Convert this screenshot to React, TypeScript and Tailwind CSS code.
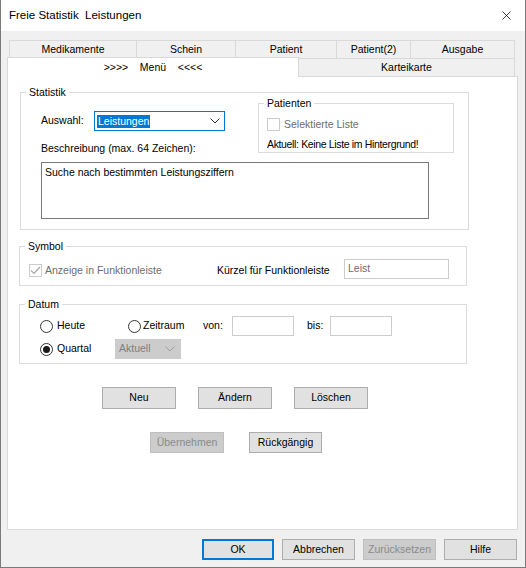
import { X } from 'lucide-react';

const font = { fontFamily: '"Liberation Sans", Arial, sans-serif' };

function Radio({ checked }: { checked?: boolean }) {
  return (
    <span className="w-[13px] h-[13px] rounded-full border border-[#333] bg-white flex items-center justify-center shrink-0">
      {checked && <span className="w-[7px] h-[7px] rounded-full bg-[#1a1a1a]" />}
    </span>
  );
}

function Chevron({ color = '#333' }: { color?: string }) {
  return (
    <svg width="10" height="6" viewBox="0 0 10 6" className="shrink-0">
      <polyline points="0.5,0.5 5,5 9.5,0.5" fill="none" stroke={color} strokeWidth="1" />
    </svg>
  );
}

function Group({ label, className, children }: { label: string; className: string; children?: React.ReactNode }) {
  return (
    <div className={`relative border border-[#dcdcdc] ${className}`}>
      <span className="absolute -top-[8px] left-[5px] bg-white px-[3px] leading-[14px]">{label}</span>
      {children}
    </div>
  );
}

function Btn({ label, w = 'w-[74px]', h = 'h-[22px]', disabled, primary }: { label: string; w?: string; h?: string; disabled?: boolean; primary?: boolean }) {
  const cls = disabled
    ? 'bg-[#cccccc] border border-[#bfbfbf] text-[#8a8a8a]'
    : primary
      ? 'bg-[#e1e1e1] border-2 border-[#0078d7] text-black'
      : 'bg-[#e1e1e1] border border-[#adadad] text-black';
  return <div className={`${w} ${h} ${cls} flex items-center justify-center shrink-0`}>{label}</div>;
}

export default function App() {
  return (
    <div className="w-[526px] h-[568px] bg-[#f0f0f0] border-l border-r border-b border-[#7a7a7a] text-[10.5px] text-black overflow-hidden flex flex-col" style={font}>
      {/* Title bar */}
      <div className="h-[31px] bg-white flex items-center justify-between pl-[8px] pr-[11px] shrink-0">
        <span className="text-[11.5px] whitespace-pre">Freie Statistik  Leistungen</span>
        <X size={15} strokeWidth={1.2} className="text-black" />
      </div>

      {/* Tabs */}
      <div className="mt-[9px] flex ml-[8px] h-[18px]">
        {[
          ['Medikamente', 'w-[128px]'],
          ['Schein', 'w-[99px]'],
          ['Patient', 'w-[101px]'],
          ['Patient(2)', 'w-[74px]'],
          ['Ausgabe', 'w-[104px]'],
        ].map(([t, w], i) => (
          <div key={t} className={`${w} border-t border-r border-[#d9d9d9] ${i === 0 ? 'border-l' : ''} flex items-center justify-center`}>
            {t}
          </div>
        ))}
      </div>
      <div className="flex ml-[6px] h-[19px]">
        <div className="relative z-10 w-[292px] h-[20px] -mt-[1px] bg-white border-t border-l border-r border-[#d9d9d9] flex items-center justify-center whitespace-pre">
          {'>>>>    Menü    <<<<'}
        </div>
        <div className="w-[216px] h-[19px] border-t border-r border-[#d9d9d9] flex items-center justify-center">
          Karteikarte
        </div>
      </div>

      {/* Panel */}
      <div className="ml-[6px] w-[511px] h-[454px] -mt-px bg-white border border-[#d9d9d9] flex flex-col shrink-0">
        <Group label="Statistik" className="ml-[12px] mt-[15px] w-[449px] h-[138px] flex flex-col">
          <div className="flex items-start">
            <div className="ml-[20px] mt-[18px] flex flex-col">
              <div className="flex items-center h-[20px]">
                <span className="w-[53px]">Auswahl:</span>
                <div className="w-[131px] h-[20px] border border-[#0078d7] flex items-center justify-between pl-[2px] pr-[4px]">
                  <span className="bg-[#0078d7] text-white leading-[13px] px-px">Leistungen</span>
                  <Chevron />
                </div>
              </div>
              <div className="mt-[11px] leading-[13px]">Beschreibung (max. 64 Zeichen):</div>
            </div>
            <div className="relative ml-auto mr-[14px] mt-[10px] w-[196px] h-[50px] border border-[#dcdcdc] flex flex-col pl-[8px]">
              <span className="absolute -top-[8px] left-[5px] bg-white px-[3px] leading-[14px]">Patienten</span>
              <div className="mt-[13px] flex items-center gap-[4px] text-[#6d6d6d]">
                <span className="w-[13px] h-[13px] border border-[#cccccc] bg-white" />
                Selektierte Liste
              </div>
              <div className="mt-[5px] leading-[13px] tracking-[-0.35px]">Aktuell: Keine Liste im Hintergrund!</div>
            </div>
          </div>
          <div className="ml-[20px] mt-[7px] w-[388px] h-[57px] border border-[#7a7a7a] px-[3px] pt-[3px] leading-[13px]">
            Suche nach bestimmten Leistungsziffern
          </div>
        </Group>

        <Group label="Symbol" className="ml-[11px] mt-[16px] w-[448px] h-[40px] flex items-center">
          <div className="ml-[9px] mt-[9px] flex items-center w-[188px] gap-[3px] text-[#6d6d6d]">
            <span className="w-[13px] h-[13px] border border-[#cccccc] bg-white flex items-center justify-center">
              <svg width="11" height="9" viewBox="0 0 11 9">
                <polyline points="1,4.5 4,7.5 10,1" fill="none" stroke="#a6a6a6" strokeWidth="1.2" />
              </svg>
            </span>
            Anzeige in Funktionleiste
          </div>
          <span className="mt-[9px] w-[127px]">Kürzel für Funktionleiste</span>
          <div className="mt-[5px] w-[105px] h-[20px] border border-[#cccccc] flex items-center pl-[3px] text-[#6d6d6d]">Leist</div>
        </Group>

        <Group label="Datum" className="ml-[11px] mt-[18px] w-[448px] h-[60px] flex flex-col">
          <div className="ml-[20px] mt-[11px] flex items-center h-[20px]">
            <div className="w-[88px] flex items-center gap-[4px]"><Radio />Heute</div>
            <div className="w-[75px] flex items-center gap-[2px]"><Radio />Zeitraum</div>
            <span className="w-[29px]">von:</span>
            <div className="w-[62px] h-[20px] border border-[#cccccc]" />
            <span className="ml-[13px] w-[23px]">bis:</span>
            <div className="w-[62px] h-[20px] border border-[#cccccc]" />
          </div>
          <div className="ml-[20px] mt-[3px] flex items-center h-[20px]">
            <div className="w-[75px] flex items-center gap-[4px]"><Radio checked />Quartal</div>
            <div className="w-[66px] h-[20px] bg-[#cccccc] border border-[#cccccc] flex items-center justify-between pl-[3px] pr-[5px] text-[#7f7f7f]">
              Aktuell
              <Chevron color="#a0a0a0" />
            </div>
          </div>
        </Group>

        <div className="mt-[23px] ml-[94px] flex gap-[22px]">
          <Btn label="Neu" />
          <Btn label="Ändern" />
          <Btn label="Löschen" />
        </div>
        <div className="mt-[23px] ml-[142px] flex gap-[25px]">
          <Btn label="Übernehmen" h="h-[21px]" disabled />
          <Btn label="Rückgängig" w="w-[73px]" h="h-[21px]" />
        </div>
      </div>

      {/* Bottom buttons */}
      <div className="mt-[9px] ml-[201px] flex gap-[8px]">
        <Btn label="OK" w="w-[72px]" h="h-[21px]" primary />
        <Btn label="Abbrechen" w="w-[73px]" h="h-[21px]" />
        <Btn label="Zurücksetzen" w="w-[73px]" h="h-[21px]" disabled />
        <Btn label="Hilfe" w="w-[73px]" h="h-[21px]" />
      </div>
    </div>
  );
}
